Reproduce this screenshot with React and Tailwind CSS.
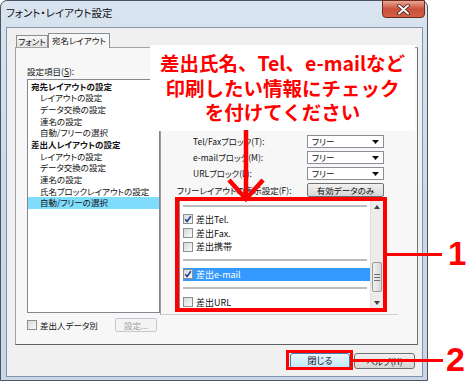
import React from 'react';

const ui = "font-['Noto_Sans_CJK_JP',sans-serif] [font-feature-settings:'palt']";

const treeItems = [
  { label: '宛先レイアウトの設定', head: true },
  { label: 'レイアウトの設定' },
  { label: 'データ交換の設定' },
  { label: '連名の設定' },
  { label: '自動/フリーの選択' },
  { label: '差出人レイアウトの設定', head: true },
  { label: 'レイアウトの設定' },
  { label: 'データ交換の設定' },
  { label: '連名の設定' },
  { label: '氏名ブロックレイアウトの設定' },
  { label: '自動/フリーの選択', selected: true },
];

const Check = ({ checked }) => (
  <span className="w-[10px] h-[10px] border border-[#8e8f8f] bg-gradient-to-br from-[#d8d8d8] to-[#fbfbfb] flex items-center justify-center shrink-0">
    {checked && (
      <svg width="8" height="8" viewBox="0 0 8 8">
        <path d="M1.2 4.2 L3.1 6.4 L6.9 1.2" stroke="#1f3c8f" strokeWidth="1.6" fill="none" />
      </svg>
    )}
  </span>
);

const Select = ({ value }) => (
  <div className="w-[77px] h-[13px] border border-[#8a8f96] bg-white flex items-center justify-between pl-[4px] pr-[4px] text-[8.5px] leading-none">
    <span>{value}</span>
    <svg width="7" height="4" viewBox="0 0 7 4">
      <path d="M0 0H7L3.5 4Z" fill="#111" />
    </svg>
  </div>
);

const FieldRow = ({ label, children }) => (
  <div className="h-[13px] flex items-center pl-[32px]">
    <span className="w-[114px] text-[8.5px] leading-none whitespace-nowrap">{label}</span>
    {children}
  </div>
);

const Separator = ({ h }) => (
  <div className={`${h} flex items-center px-[3px]`}>
    <div className="h-[2px] w-full bg-[#bdbdbd]" />
  </div>
);

const CheckRow = ({ label, checked, selected, h = 'h-[14px]' }) => (
  <div className={`${h} flex items-center pl-[3px]`}>
    <div className={`flex items-center gap-[3px] w-full h-[13px] pr-[2px] ${selected ? 'bg-[#3399ff] text-white' : ''}`}>
      <Check checked={checked} />
      <span className="text-[9px] leading-none">{label}</span>
    </div>
  </div>
);

const Triangle = ({ up }) => (
  <svg width="6" height="4" viewBox="0 0 6 4">
    <path d={up ? 'M0 4H6L3 0Z' : 'M0 0H6L3 4Z'} fill="#404040" />
  </svg>
);

export default function App() {
  return (
    <div className={`relative w-[470px] h-[382px] bg-white overflow-hidden text-[#111] ${ui}`}>
      {/* window */}
      <div className="w-[428px] h-[381px] flex flex-col border border-[#4a5563] rounded-t-[7px] bg-gradient-to-b from-[#d9e4f0] via-[#cad8e8] to-[#c8d6e6]">
        <div className="h-[26px] flex items-start justify-between">
          <span className="ml-[5px] mt-[5px] text-[10.5px] leading-[13px]">フォント・レイアウト設定</span>
          <div className="-mt-px mr-[2px] w-[43px] h-[18px] rounded-b-[4px] border border-[#6b2a1d] bg-gradient-to-b from-[#e8a794] via-[#c9503a] to-[#d45f45] flex items-center justify-center">
            <svg width="13" height="11" viewBox="0 0 13 11">
              <path d="M2 1.5 L11 9.5 M11 1.5 L2 9.5" stroke="#3a1a12" strokeWidth="3.6" strokeLinecap="round" />
              <path d="M2 1.5 L11 9.5 M11 1.5 L2 9.5" stroke="#ffffff" strokeWidth="2" strokeLinecap="round" />
            </svg>
          </div>
        </div>

        {/* client */}
        <div className="flex-1 ml-[5px] mr-[4px] mb-[3px] border border-[#8394a9] bg-[#f0f0f0] flex flex-col">
          {/* tabs */}
          <div className="mt-[5px] ml-[9px] h-[14px] flex items-end relative z-10">
            <div className="h-[12px] w-[32px] border border-b-0 border-[#8c8e94] bg-gradient-to-b from-[#f6f6f6] to-[#e3e3e3] text-[8.5px] leading-[11px] text-center whitespace-nowrap">
              フォント
            </div>
            <div className="h-[15px] w-[62px] -mb-px border border-b-0 border-[#8c8e94] bg-[#f7f7f7] text-[8.5px] leading-[13px] text-center whitespace-nowrap">
              宛名レイアウト
            </div>
          </div>

          {/* tab panel */}
          <div className="ml-[8px] mr-[4px] h-[298px] border border-[#a0a3a8] border-r-[#6f7277] border-b-[#5e6166] bg-[#f7f7f7] flex pl-[11px]">
            {/* left column */}
            <div className="w-[133px] pt-[18px] flex flex-col">
              <div className="h-[13px] text-[8.5px] leading-[11px]">
                設定項目(<span className="underline">S</span>):
              </div>
              <div className="h-[234px] border border-[#828790] bg-white flex flex-col">
                {treeItems.map((it, i) => (
                  <div
                    key={i}
                    className={`h-[11.7px] flex items-center text-[8.5px] leading-none whitespace-nowrap ${
                      it.head ? 'pl-[3px] font-bold' : 'pl-[12px]'
                    } ${it.selected ? 'bg-[#80dcfb]' : ''}`}
                  >
                    {it.label}
                  </div>
                ))}
              </div>
              <div className="mt-[5px] h-[14px] flex items-center">
                <Check />
                <span className="ml-[3px] text-[8.5px] leading-none w-[75px]">差出人データ別</span>
                <div className="w-[42px] h-[14px] border border-[#c4c8cc] bg-[#f4f4f4] rounded-[2px] text-[8.5px] leading-[12px] text-center text-[#a3a3a3]">
                  設定...
                </div>
              </div>
            </div>

            {/* right column */}
            <div className="w-[238px] mt-[4px] h-[263px] border-l border-b border-l-[#9c9c9c] border-b-[#cfcfcf] pt-[83px] flex flex-col">
              <div className="flex flex-col gap-[3px]">
                <FieldRow label="Tel/Faxブロック(T):">
                  <Select value="フリー" />
                </FieldRow>
                <FieldRow label="e-mailブロック(M):">
                  <Select value="フリー" />
                </FieldRow>
                <FieldRow label="URLブロック(L):">
                  <Select value="フリー" />
                </FieldRow>
                <div className="h-[14px] flex items-center pl-[16px]">
                  <span className="w-[130px] text-[8.5px] leading-none whitespace-nowrap">フリーレイアウトの表示設定(F):</span>
                  <div className="w-[77px] h-[14px] border border-[#707070] rounded-[2px] bg-gradient-to-b from-[#f2f2f2] to-[#d6d6d6] text-[8.5px] leading-[12px] text-center">
                    有効データのみ
                  </div>
                </div>
              </div>

              <div className="mt-[2px] ml-[18px] w-[205px] h-[111px] border border-[#828790] bg-white flex">
                <div className="flex-1 flex flex-col">
                  <Separator h="h-[12px]" />
                  <CheckRow label="差出Tel." checked />
                  <CheckRow label="差出Fax." />
                  <CheckRow label="差出携帯" h="h-[13px]" />
                  <Separator h="h-[14px]" />
                  <CheckRow label="差出e-mail" checked selected />
                  <Separator h="h-[14px]" />
                  <CheckRow label="差出URL" />
                </div>
                <div className="w-[13px] bg-[#ececec] border-l border-[#e0e0e0] flex flex-col">
                  <div className="h-[13px] flex items-center justify-center">
                    <Triangle up />
                  </div>
                  <div className="h-[49px]" />
                  <div className="h-[30px] mx-[1px] rounded-[2px] border border-[#9b9b9b] bg-gradient-to-r from-[#f0f0f0] to-[#d8d8d8] flex flex-col items-center justify-center gap-[2px]">
                    <div className="w-[6px] h-px bg-[#707070]" />
                    <div className="w-[6px] h-px bg-[#707070]" />
                    <div className="w-[6px] h-px bg-[#707070]" />
                  </div>
                  <div className="flex-1" />
                  <div className="h-[13px] flex items-center justify-center">
                    <Triangle />
                  </div>
                </div>
              </div>
            </div>
          </div>

          {/* bottom buttons */}
          <div className="mt-[8px] mr-[7px] flex justify-end gap-[4px]">
            <div className="w-[60px] h-[16px] border border-[#3c7fb1] rounded-[3px] bg-gradient-to-b from-[#eaf6fd] to-[#bee6fd] text-[9px] leading-[14px] text-center">
              閉じる
            </div>
            <div className="w-[61px] h-[16px] border border-[#707070] rounded-[3px] bg-gradient-to-b from-[#f2f2f2] to-[#d5d5d5] text-[8.5px] leading-[14px] text-center">
              ヘルプ(H)
            </div>
          </div>
        </div>
      </div>

      {/* callout */}
      <div className="absolute left-[150px] top-[45px] w-[265px] h-[86px] bg-white pt-[6px] text-center text-[#ff0000] font-bold text-[19.5px] leading-[24.5px] font-['Noto_Sans_CJK_JP',sans-serif] [font-feature-settings:normal]">
        <div>差出氏名、Tel、e-mailなど</div>
        <div>印刷したい情報にチェック</div>
        <div>を付けてください</div>
      </div>

      {/* arrow */}
      <svg className="absolute left-[220px] top-[128px]" width="52" height="76" viewBox="0 0 52 76">
        <path d="M26 2 V70" stroke="#ff0000" strokeWidth="4.5" />
        <path d="M9 52 L26 71 L43 52" stroke="#ff0000" strokeWidth="4.5" fill="none" />
      </svg>

      {/* annotation 1 */}
      <div className="absolute left-[175px] top-[197px] w-[212px] h-[115px] border-[4px] border-[#ff0000]" />
      <div className="absolute left-[387px] top-[253px] w-[55px] h-[3px] bg-[#ff0000]" />
      <span className="absolute left-[448px] top-[238px] text-[#ff0000] font-bold text-[33px] leading-[32px] font-['Liberation_Sans',Arial,sans-serif]">
        1
      </span>

      {/* annotation 2 */}
      <div className="absolute left-[286px] top-[350px] w-[67px] h-[20px] border-[3px] border-[#ff0000]" />
      <div className="absolute left-[353px] top-[359px] w-[90px] h-[3px] bg-[#ff0000]" />
      <span className="absolute left-[446px] top-[343px] text-[#ff0000] font-bold text-[34px] leading-[32px] font-['Liberation_Sans',Arial,sans-serif]">
        2
      </span>
    </div>
  );
}
